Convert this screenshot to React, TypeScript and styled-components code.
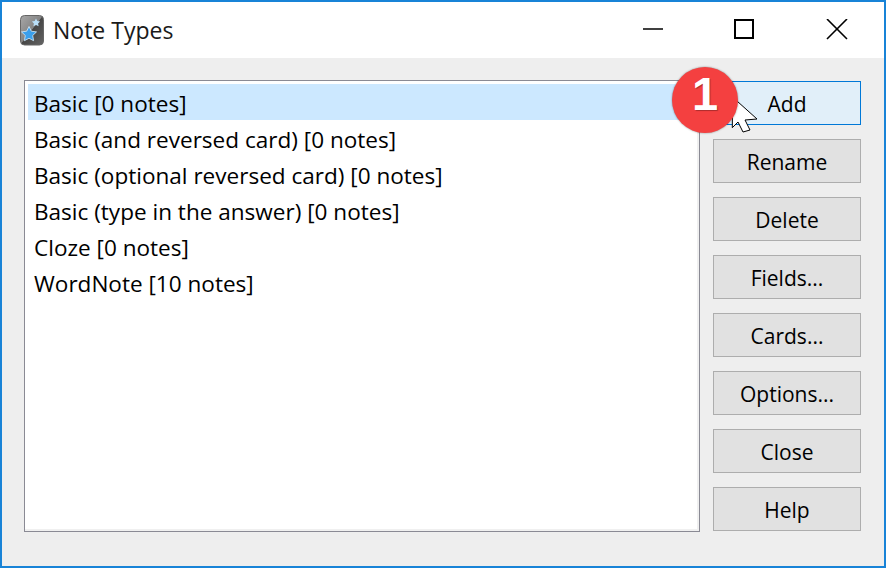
import React from "react";
import styled, { createGlobalStyle } from "styled-components";

const noteTypes = [
  "Basic [0 notes]",
  "Basic (and reversed card) [0 notes]",
  "Basic (optional reversed card) [0 notes]",
  "Basic (type in the answer) [0 notes]",
  "Cloze [0 notes]",
  "WordNote [10 notes]",
];

const actions = ["Add", "Rename", "Delete", "Fields...", "Cards...", "Options...", "Close", "Help"];

const App = () => {
  return (
    <>
      <GlobalStyle />
      <Window>
        <TitleBar>
          <AppIcon />
          <Title>Note Types</Title>
          <WindowControls>
            <ControlButton>
              <svg width="22" height="22" viewBox="0 0 22 22">
                <path d="M1 10h20" stroke="#000" strokeWidth="1.5" />
              </svg>
            </ControlButton>
            <ControlButton>
              <svg width="22" height="22" viewBox="0 0 22 22">
                <rect x="1" y="1" width="18" height="18" fill="none" stroke="#000" strokeWidth="2" />
              </svg>
            </ControlButton>
            <ControlButton>
              <svg width="22" height="22" viewBox="0 0 22 22">
                <path d="M1 0l20 20M21 0l-20 20" stroke="#000" strokeWidth="1.6" />
              </svg>
            </ControlButton>
          </WindowControls>
        </TitleBar>
        <Body>
          <NoteList>
            {noteTypes.map((name, i) => (
              <NoteRow key={name} $selected={i === 0}>
                {name}
              </NoteRow>
            ))}
          </NoteList>
          <ButtonColumn>
            {actions.map((label, i) => (
              <ActionButton key={label} $hovered={i === 0}>
                {label}
              </ActionButton>
            ))}
          </ButtonColumn>
          <Pointer />
          <StepBadge>1</StepBadge>
        </Body>
      </Window>
    </>
  );
};

export default App;

const AppIcon = () => (
  <IconMark width="24" height="32" viewBox="0 0 24 32">
    <defs>
      <linearGradient id="cardFill" x1="0" y1="0" x2="1" y2="1">
        <stop offset="0" stopColor="#a8a8a8" />
        <stop offset="0.48" stopColor="#858585" />
        <stop offset="0.5" stopColor="#464646" />
        <stop offset="1" stopColor="#646464" />
      </linearGradient>
    </defs>
    <rect x="0.5" y="0.5" width="23" height="29.500" rx="4" fill="url(#cardFill)" stroke="#666" />
    <path
      d="M16 3.500l1.300 2.600 2.800.4-2 2 .5 2.800-2.600-1.300-2.600 1.300.5-2.800-2-2 2.800-.4z"
      fill="#b9def7"
    />
    <path
      d="M9 11.500l2.300 4.700 5.200.7-3.800 3.600.9 5.200-4.600-2.400-4.600 2.400.9-5.200-3.800-3.600 5.200-.7z"
      fill="#3a9fec"
      stroke="#d6ecfb"
      strokeWidth="0.8"
    />
  </IconMark>
);

const Pointer = () => (
  <PointerMark width="30" height="38" viewBox="0 0 30 38">
    <path
      d="M2.500 0L2.300 30.700L8 25L13 35L20 33L15 23L27 22Z"
      fill="#fff"
      stroke="#000"
      strokeWidth="1"
    />
  </PointerMark>
);

const GlobalStyle = createGlobalStyle`
  html, body {
    margin: 0;
    padding: 0;
  }

  body {
    font-family: "Open Sans", "Noto Sans", "Liberation Sans", sans-serif;
    color: #000;
  }
`;

const Window = styled.div`
  box-sizing: border-box;
  width: 886px;
  height: 568px;
  border: 2px solid #1883d7;
  background-color: #eeeeee;
  display: flex;
  flex-direction: column;
`;

const TitleBar = styled.div`
  height: 56px;
  flex-shrink: 0;
  background-color: #fff;
  display: flex;
  align-items: center;
  padding-left: 18px;
`;

const IconMark = styled.svg`
  flex-shrink: 0;
  margin-top: 2px;
`;

const Title = styled.span`
  margin-left: 9px;
  font-size: 23px;
  color: #1a1a1a;
`;

const WindowControls = styled.div`
  margin-left: auto;
  display: flex;
  padding-right: 1px;
`;

const ControlButton = styled.div`
  width: 92px;
  height: 56px;
  display: flex;
  align-items: center;
  justify-content: center;
`;

const Body = styled.div`
  position: relative;
  flex: 1;
  display: flex;
  align-items: flex-start;
  gap: 13px;
  padding: 22px 23px 0 22px;
`;

const NoteList = styled.div`
  box-sizing: border-box;
  width: 676px;
  height: 452px;
  padding: 3px;
  background-color: #fff;
  border: 1px solid #8a8a94;
  box-shadow: inset -2px -2px 0 #f0f0f0;
`;

const NoteRow = styled.div<{ $selected: boolean }>`
  height: 36px;
  padding-left: 6px;
  font-size: 22.55px;
  line-height: 40px;
  white-space: nowrap;
  background-color: ${(props) => (props.$selected ? "#cce8ff" : "transparent")};
`;

const ButtonColumn = styled.div`
  display: flex;
  flex-direction: column;
  gap: 14px;
  margin-top: 1px;
`;

const ActionButton = styled.div<{ $hovered: boolean }>`
  box-sizing: border-box;
  width: 148px;
  height: 44px;
  padding-top: 2px;
  display: flex;
  align-items: center;
  justify-content: center;
  font-size: 21px;
  background-color: ${(props) => (props.$hovered ? "#e1eff9" : "#e1e1e1")};
  border: ${(props) => (props.$hovered ? "1px solid #0078d7" : "1px solid #adadad")};
`;

const StepBadge = styled.div`
  position: absolute;
  left: 670px;
  top: 9px;
  width: 66px;
  height: 66px;
  padding-bottom: 13px;
  box-sizing: border-box;
  border-radius: 50%;
  background-color: #f44040;
  box-shadow: 0 0 2px rgba(0, 0, 0, 0.45);
  color: #fff;
  font-family: "Liberation Sans", sans-serif;
  font-size: 47px;
  font-weight: 700;
  text-shadow: 1px 1px 1px rgba(0, 0, 0, 0.3);
  display: flex;
  align-items: center;
  justify-content: center;
`;

const PointerMark = styled.svg`
  position: absolute;
  left: 728px;
  top: 39px;
`;
